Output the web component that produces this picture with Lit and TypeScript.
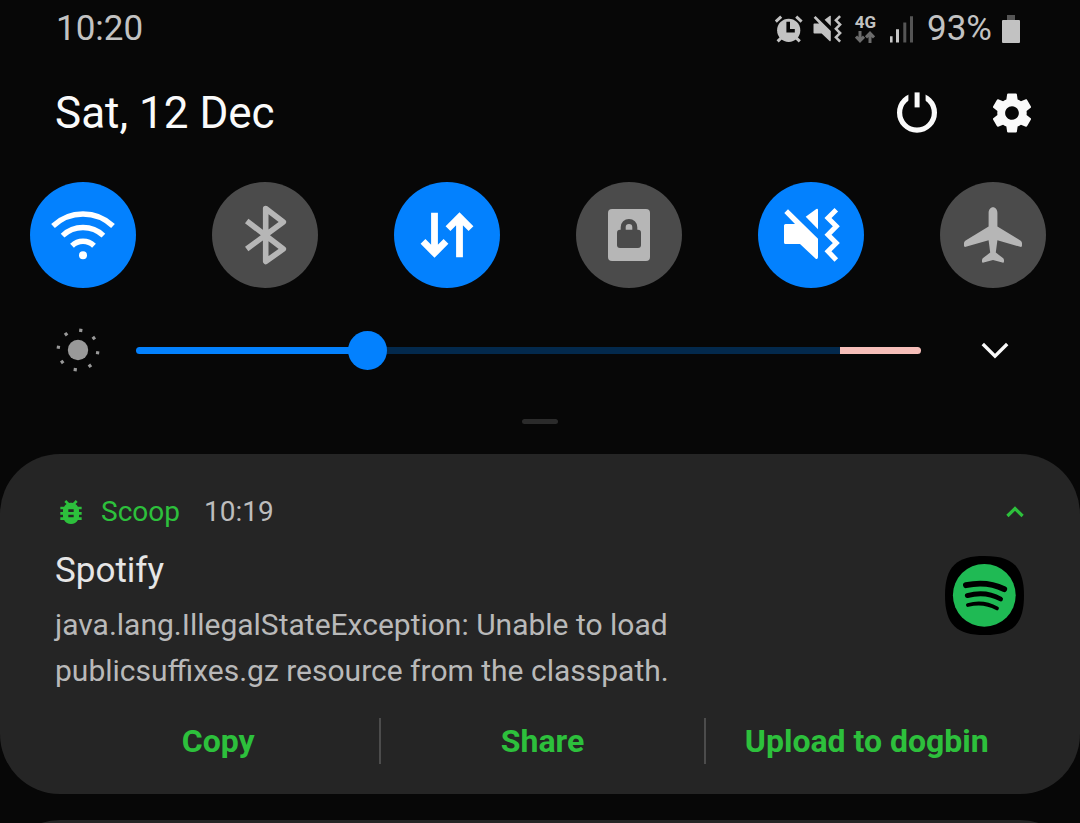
import { LitElement, html, svg, css } from "lit";
import { customElement, property, state } from "lit/decorators.js";

const mutePaths = svg`
  <path d="M26.3 31 30 27.3 60 56.7V75.3Q59.8 77.6 58 77L42 62H27.6Q26 62 26 60.4V43.6Q26 42 27.6 42H37Z" fill="currentColor"/>
  <path d="M47.7 34.7 58.3 27Q60 26.4 60 28V47.3Z" fill="currentColor"/>
  <path d="M78.3 27.7 70 36 78.3 44.3 70 52.7 78.3 61 70 69.3 78.3 78" fill="none" stroke="currentColor" stroke-width="5"/>`;

const glyphs = {
  wifi: svg`
    <g fill="none" stroke="currentColor" stroke-width="5.4">
      <path d="M23 44A43.5 43.5 0 0 1 83 44"/>
      <path d="M32.6 53.6A29.8 29.8 0 0 1 73.4 53.6"/>
      <path d="M42 63.8A15.7 15.7 0 0 1 64 63.8"/>
    </g>
    <circle cx="53" cy="73.3" r="4" fill="currentColor"/>`,
  bluetooth: svg`
    <path d="M34.7 39 71.3 67 53.7 79.5V26.5L71.3 40 34.7 67" fill="none" stroke="currentColor" stroke-width="5.6" stroke-linejoin="round"/>`,
  data: svg`
    <g fill="none" stroke="currentColor" stroke-width="6.8">
      <path d="M40.5 30.7V72M29 59.4 40.5 71 52 59.4"/>
      <path d="M65.5 75.3V34M54 46.6 65.5 35 77 46.6"/>
    </g>`,
  folder: svg`
    <rect x="32" y="27" width="42" height="52" rx="4" fill="currentColor"/>
    <rect x="41" y="47.7" width="24" height="18.3" rx="3" fill="#4b4b4b"/>
    <path d="M47.2 50V45.2a5.8 5.8 0 0 1 11.6 0V50" fill="none" stroke="#4b4b4b" stroke-width="5"/>`,
  mute: mutePaths,
  plane: svg`
    <path d="M53 25.3C55.6 25.3 57.4 28 57.4 31V44.6L80.4 58.4Q82 59.4 82 61V63.6Q82 65.4 80.2 64.8L57.4 58.2 55.8 70.6 62.6 75.8Q64 76.8 64 78.2V79.4Q64 81 62.4 80.6L53 78 43.6 80.6Q42 81 42 79.4V78.2Q42 76.8 43.4 75.8L50.2 70.6 48.6 58.2 25.8 64.8Q24 65.4 24 63.6V61Q24 59.4 25.6 58.4L48.6 44.6V31C48.6 28 50.4 25.3 53 25.3Z" fill="currentColor"/>`,
};

type GlyphName = keyof typeof glyphs;

@customElement("quick-toggle")
class QuickToggle extends LitElement {
  @property() glyph: GlyphName = "wifi";
  @property() label = "";
  @property({ type: Boolean }) on = false;

  static styles = css`
    :host { display: block; }
    .toggle {
      display: block;
      width: 106px;
      height: 106px;
      padding: 0;
      border: 0;
      border-radius: 50%;
      background: #4b4b4b;
      color: #b6b6b6;
      cursor: pointer;
    }
    .toggle[aria-pressed="true"] { background: #0381fe; color: #fff; }
    .icon { display: block; width: 100%; height: 100%; }
  `;

  render() {
    return html`<button class="toggle" aria-label=${this.label} aria-pressed=${this.on ? "true" : "false"}
      @click=${() => (this.on = !this.on)}>
      <svg class="icon" viewBox="0 0 106 106" aria-hidden="true">${glyphs[this.glyph]}</svg>
    </button>`;
  }
}

@customElement("status-bar")
class StatusBar extends LitElement {
  static styles = css`
    :host {
      display: flex;
      justify-content: space-between;
      align-items: center;
      height: 58px;
      padding: 0 60px 0 56px;
      font-size: 35px;
      line-height: 58px;
      color: #c2c2c2;
    }
    .tray { display: flex; align-items: center; gap: 13px; }
    .tray svg { display: block; }
    .pair { display: flex; align-items: center; gap: 10px; }
    .network { display: flex; flex-direction: column; align-items: center; gap: 3px; }
    .kind { font-size: 17px; line-height: 12px; font-weight: 700; }
  `;

  render() {
    return html`
      <span>10:20</span>
      <div class="tray">
        <div class="pair">
          <svg width="28" height="28" viewBox="0 0 28 28" role="img" aria-label="Alarm">
            <circle cx="13.7" cy="15.3" r="11.6" fill="#c2c2c2"/>
            <path d="M0.8 6.6 6.2 1.6M21.2 1.6 26.6 6.6" stroke="#c2c2c2" stroke-width="3"/>
            <path d="M2.6 26.4 6.5 22.6M24.8 26.4 20.9 22.6" stroke="#c2c2c2" stroke-width="3"/>
            <path d="M11.4 6.8H15V14H19.8V17.6H11.4Z" fill="#070707"/>
          </svg>
          <svg width="29" height="28" viewBox="25 26 57 54" role="img" aria-label="Muted">${mutePaths}</svg>
        </div>
        <div class="network">
          <span class="kind">4G</span>
          <svg width="20" height="12" viewBox="0 0 20 12" aria-hidden="true">
            <g fill="none" stroke="#6c6c6c" stroke-width="3">
              <path d="M5 0V9.5M1 5.6 5 9.8 9 5.6"/>
              <path d="M15 12V2.5M11 6.4 15 2.2 19 6.4"/>
            </g>
          </svg>
        </div>
        <svg width="25" height="27" viewBox="0 0 25 27" role="img" aria-label="Signal">
          <path d="M1 20.3H3.6V26.6H1ZM7 13.3H10V26.6H7Z" fill="#c8c8c8"/>
          <path d="M14.3 6.6H17.3V26.6H14.3ZM21 .3H24V26.6H21Z" fill="#555"/>
        </svg>
        <div class="pair">
          <span>93%</span>
          <svg width="18" height="28" viewBox="0 0 18 28" role="img" aria-label="Battery">
            <rect x="5" y="0" width="8" height="6" fill="#555"/>
            <rect x="0" y="5" width="18" height="23" rx="1" fill="#c2c2c2"/>
          </svg>
        </div>
      </div>`;
  }
}

@customElement("app-notification")
class AppNotification extends LitElement {
  @property() app = "";
  @property() time = "";
  @property() heading = "";
  @property() message = "";
  @property({ attribute: false }) actions: string[] = [];

  static styles = css`
    :host {
      display: block;
      padding: 36px 52px 30px 55px;
      border-radius: 60px;
      background: #252525;
    }
    .top { display: flex; align-items: center; height: 44px; font-size: 28px; line-height: 44px; }
    .bug { width: 32px; height: 32px; margin-right: 14px; }
    .app { color: #2dc03c; margin-right: 24px; }
    .time { color: #bdbdbd; }
    .collapse {
      display: flex;
      margin-left: auto;
      padding: 4px;
      border: 0;
      background: none;
      cursor: pointer;
    }
    .content { display: flex; justify-content: space-between; gap: 56px; padding: 14px 4px 0 0; }
    .heading { margin: 0; font-size: 35px; line-height: 46px; font-weight: 400; color: #e6e6e6; }
    .message { margin: 8px 0 0; font-size: 30px; line-height: 46px; color: #b9b9b9; }
    .logo { flex: none; width: 79px; height: 79px; margin-top: 8px; }
    .actions { display: flex; margin-top: 24px; }
    .action {
      flex: 1 1 0;
      height: 46px;
      padding: 0;
      border: 0;
      border-left: 2px solid #4c4c4c;
      background: none;
      color: #2dc03c;
      font: 700 32px/46px Roboto, sans-serif;
      cursor: pointer;
    }
    .action:first-child { border-left-color: transparent; }
  `;

  render() {
    return html`
      <div class="top">
        <svg class="bug" viewBox="0 0 24 24" aria-hidden="true">
          <path fill="#2dc03c" d="M20 8h-2.81c-.45-.78-1.07-1.45-1.82-1.96L17 4.41 15.59 3l-2.17 2.17C12.96 5.06 12.49 5 12 5c-.49 0-.96.06-1.41.17L8.41 3 7 4.41l1.62 1.63C7.88 6.55 7.26 7.22 6.81 8H4v2h2.09c-.05.33-.09.66-.09 1v1H4v2h2v1c0 .34.04.67.09 1H4v2h2.81c1.04 1.79 2.97 3 5.19 3s4.15-1.21 5.19-3H20v-2h-2.09c.05-.33.09-.66.09-1v-1h2v-2h-2v-1c0-.34-.04-.67-.09-1H20V8zm-6 8h-4v-2h4v2zm0-4h-4v-2h4v2z"/>
        </svg>
        <span class="app">${this.app}</span>
        <span class="time">${this.time}</span>
        <button class="collapse" aria-label="Collapse notification">
          <svg width="18" height="12" viewBox="0 0 18 12" aria-hidden="true">
            <path d="M1.4 10 9 2.6 16.6 10" fill="none" stroke="#2dc03c" stroke-width="3.2"/>
          </svg>
        </button>
      </div>
      <div class="content">
        <div>
          <h2 class="heading">${this.heading}</h2>
          <p class="message">${this.message}</p>
        </div>
        <svg class="logo" viewBox="0 0 79 79" role="img" aria-label="Spotify logo">
          <path d="M39.5 0C67 0 79 10 79 39.5S67 79 39.5 79 0 69 0 39.5 12 0 39.5 0Z" fill="#000"/>
          <circle cx="39.3" cy="39.3" r="31.4" fill="#1fba54"/>
          <g fill="none" stroke="#000" stroke-linecap="round">
            <path d="M20.9 29.2Q42 24.6 59.2 33.2" stroke-width="5.8"/>
            <path d="M22.3 39.6Q40.5 34.6 55.6 43" stroke-width="4.8"/>
            <path d="M22.9 49Q38.5 44.8 52 52.4" stroke-width="3.8"/>
          </g>
        </svg>
      </div>
      <div class="actions">
        ${this.actions.map((name) => html`<button class="action">${name}</button>`)}
      </div>`;
  }
}

const toggles: { glyph: GlyphName; label: string; on: boolean }[] = [
  { glyph: "wifi", label: "Wi-Fi", on: true },
  { glyph: "bluetooth", label: "Bluetooth", on: false },
  { glyph: "data", label: "Mobile data", on: true },
  { glyph: "folder", label: "Secure Folder", on: false },
  { glyph: "mute", label: "Mute", on: true },
  { glyph: "plane", label: "Flight mode", on: false },
];

@customElement("app-root")
class AppRoot extends LitElement {
  @state() private brightness = 284;

  static styles = css`
    :host {
      display: block;
      height: 100vh;
      overflow: hidden;
      background: #070707;
      color: #fafafa;
      font-family: Roboto, sans-serif;
    }
    .header {
      display: flex;
      align-items: center;
      justify-content: space-between;
      height: 110px;
      padding: 0 48px 0 55px;
    }
    .date { margin: 0; font-size: 44px; line-height: 60px; font-weight: 400; }
    .tools { display: flex; align-items: center; gap: 54px; }
    .tool { display: block; padding: 0; border: 0; background: none; cursor: pointer; }
    .tool svg { display: block; }
    .toggles {
      display: flex;
      justify-content: space-between;
      padding: 14px 34px 0 30px;
    }
    .brightness {
      display: flex;
      align-items: center;
      height: 46px;
      padding: 39px 70px 0 55px;
    }
    .sun { flex: none; width: 46px; height: 46px; margin-right: 35px; }
    .slider {
      flex: 1;
      min-width: 0;
      height: 40px;
      margin: 0 59px 0 0;
      appearance: none;
      background: none;
      cursor: pointer;
    }
    .slider::-webkit-slider-runnable-track {
      height: 7px;
      border-radius: 4px;
      background: linear-gradient(to right, #0381fe var(--fill), #03294c var(--fill), #03294c 89.7%, #f6beb9 89.7%);
    }
    .slider::-webkit-slider-thumb {
      appearance: none;
      width: 39px;
      height: 39px;
      margin-top: -16px;
      border-radius: 50%;
      background: #0381fe;
    }
    .handle {
      width: 36px;
      height: 5px;
      margin: 46px auto 30px;
      border-radius: 3px;
      background: #2b2b2b;
    }
    .cards { display: flex; flex-direction: column; gap: 26px; }
    .next { height: 340px; border-radius: 60px; background: #252525; }
  `;

  render() {
    const dots = [0, 45, 90, 135, 180, 225, 270, 315];
    return html`
      <status-bar></status-bar>
      <div class="header">
        <h1 class="date">Sat, 12 Dec</h1>
        <div class="tools">
          <button class="tool" aria-label="Power">
            <svg width="42" height="42" viewBox="-1 0 42 42" aria-hidden="true">
              <circle cx="20" cy="20.7" r="17.4" fill="none" stroke="#fafafa" stroke-width="5.2"/>
              <path d="M11.4 0H28.6V15H11.4Z" fill="#070707"/>
              <path d="M17.6 .4H22.6V15.4H17.6Z" fill="#fafafa"/>
            </svg>
          </button>
          <button class="tool" aria-label="Settings">
            <svg width="40" height="40" viewBox="1.8 1.8 20.4 20.4" aria-hidden="true">
              <path fill="#fafafa" d="M19.43 12.98c.04-.32.07-.64.07-.98s-.03-.66-.07-.98l2.11-1.65c.19-.15.24-.42.12-.64l-2-3.46c-.12-.22-.39-.3-.61-.22l-2.49 1c-.52-.4-1.08-.73-1.69-.98l-.38-2.65C14.46 2.18 14.25 2 14 2h-4c-.25 0-.46.18-.49.42l-.38 2.65c-.61.25-1.17.59-1.69.98l-2.49-1c-.23-.09-.49 0-.61.22l-2 3.46c-.13.22-.07.49.12.64l2.11 1.65c-.04.32-.07.65-.07.98s.03.66.07.98l-2.11 1.65c-.19.15-.24.42-.12.64l2 3.46c.12.22.39.3.61.22l2.49-1c.52.4 1.08.73 1.69.98l.38 2.65c.03.24.24.42.49.42h4c.25 0 .46-.18.49-.42l.38-2.65c.61-.25 1.17-.59 1.69-.98l2.49 1c.23.09.49 0 .61-.22l2-3.46c.12-.22.07-.49-.12-.64l-2.11-1.65zM12 15.5c-1.93 0-3.5-1.57-3.5-3.5s1.57-3.5 3.5-3.5 3.5 1.57 3.5 3.5-1.57 3.5-3.5 3.5z"/>
            </svg>
          </button>
        </div>
      </div>
      <div class="toggles">
        ${toggles.map((t) => html`<quick-toggle .glyph=${t.glyph} .label=${t.label} .on=${t.on}></quick-toggle>`)}
      </div>
      <div class="brightness">
        <svg class="sun" viewBox="-23 -23 46 46" aria-hidden="true">
          <circle r="10.2" fill="#999"/>
          ${dots.map((a) => svg`<rect x="-1.6" y="-21.4" width="3.2" height="3.2" fill="#999" transform="rotate(${a + 8})"/>`)}
        </svg>
        <input class="slider" type="range" min="0" max="1000" aria-label="Brightness"
          style="--fill:${this.brightness / 10}%"
          .value=${String(this.brightness)}
          @input=${(e: Event) => (this.brightness = Number((e.target as HTMLInputElement).value))}>
        <button class="tool" aria-label="More brightness options">
          <svg width="30" height="18" viewBox="0 0 30 18" aria-hidden="true">
            <path d="M2.8 3 15 15.2 27.2 3" fill="none" stroke="#fafafa" stroke-width="3.4"/>
          </svg>
        </button>
      </div>
      <div class="handle"></div>
      <div class="cards">
        <app-notification app="Scoop" time="10:19" heading="Spotify"
          message="java.lang.IllegalStateException: Unable to load publicsuffixes.gz resource from the classpath."
          .actions=${["Copy", "Share", "Upload to dogbin"]}></app-notification>
        <div class="next"></div>
      </div>`;
  }
}
